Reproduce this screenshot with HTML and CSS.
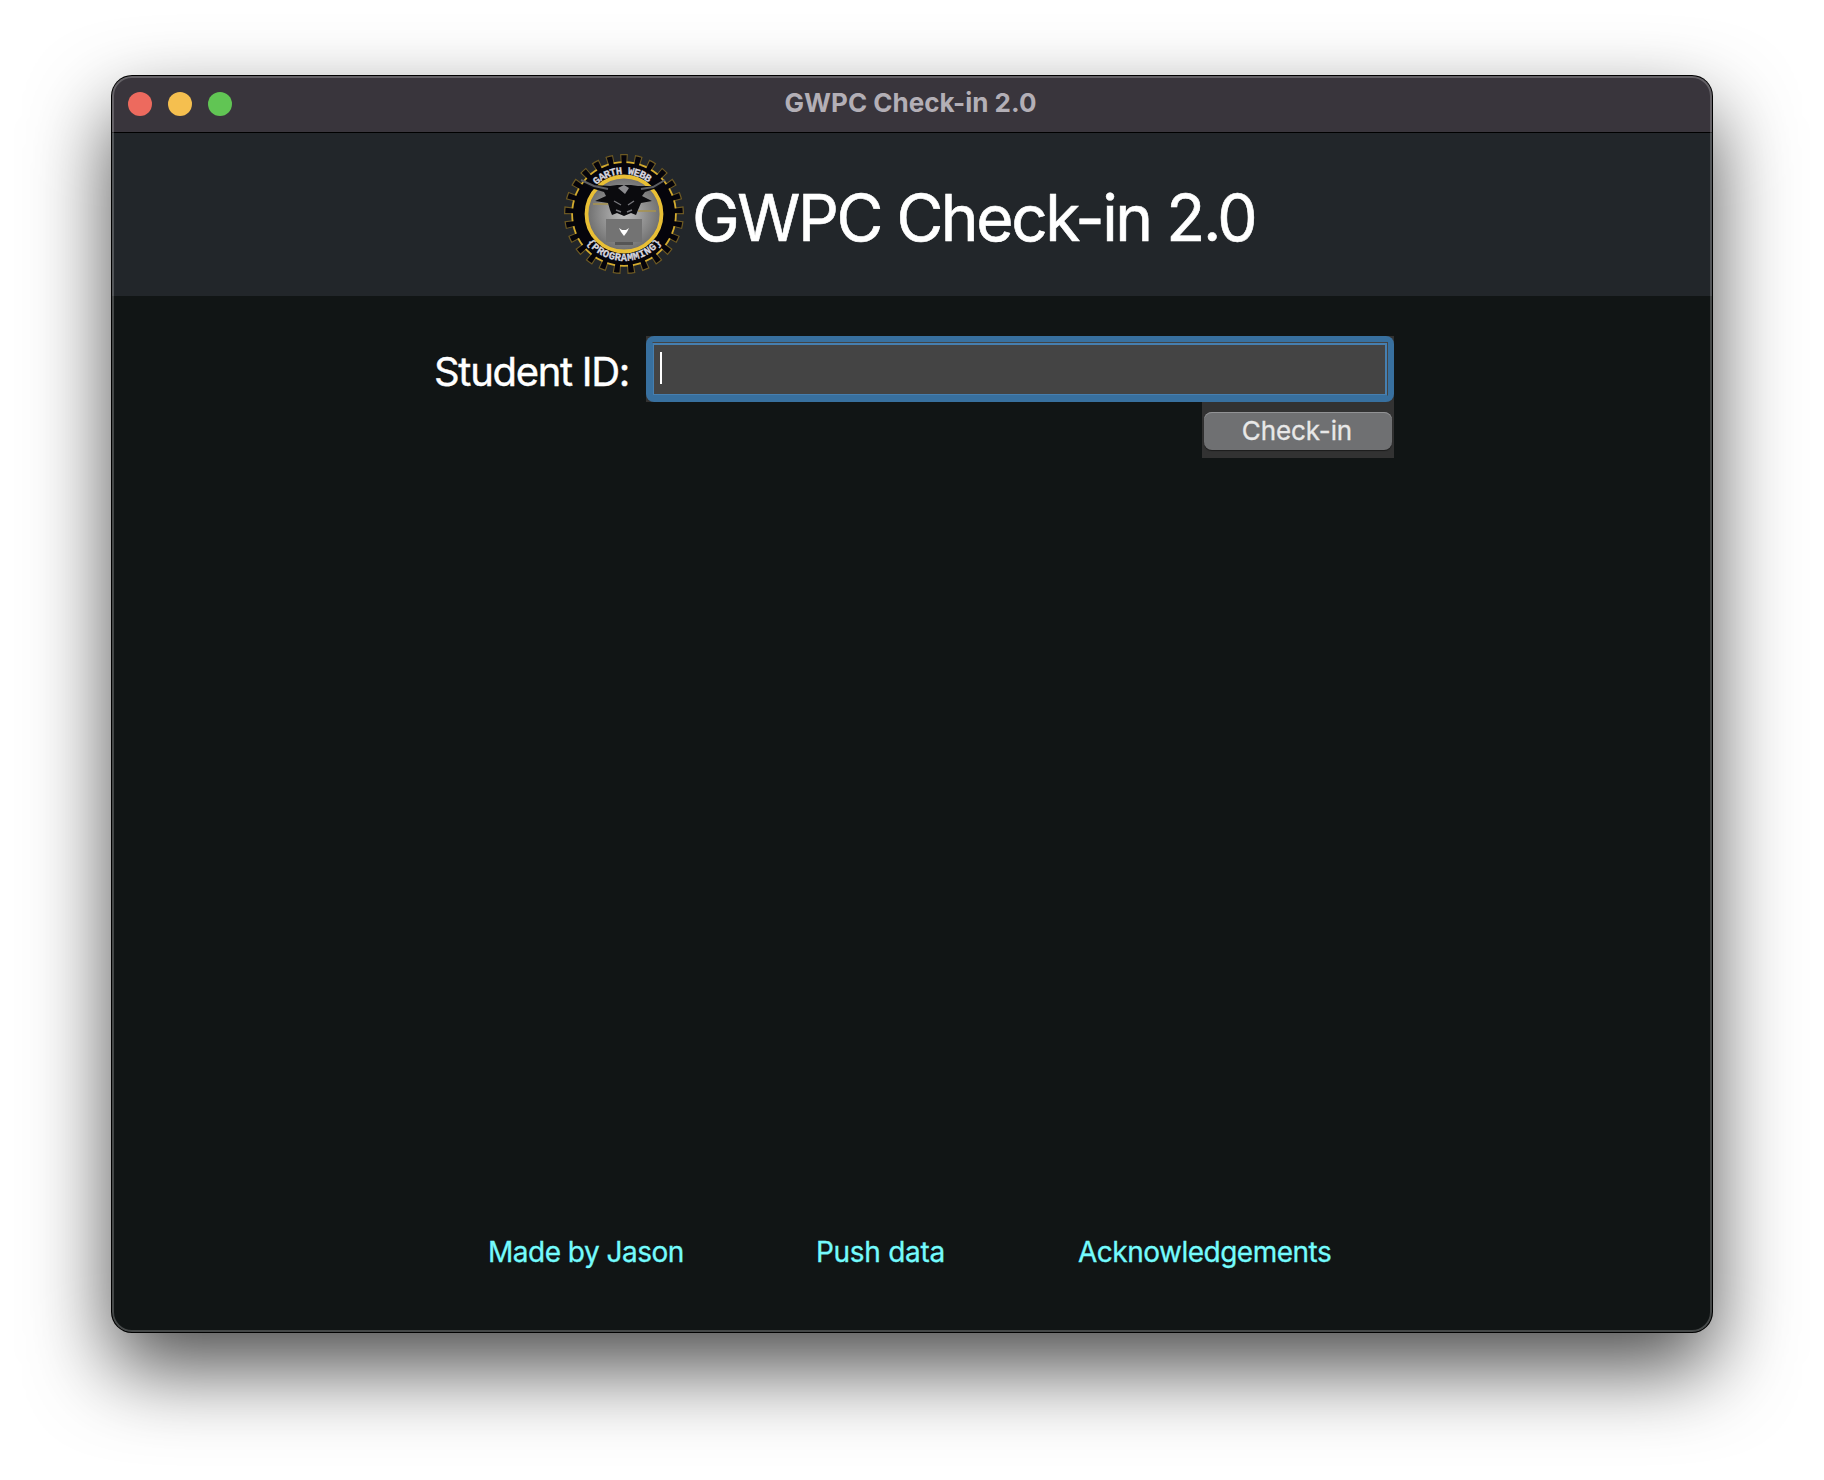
FILE: index.html
```html
<!DOCTYPE html>
<html lang="en">
<head>
<meta charset="utf-8">
<title>GWPC Check-in 2.0</title>
<link rel="stylesheet" href="styles.css">
</head>
<body>
<main class="window">
  <div class="titlebar">
    <div class="lights"><span class="light close"></span><span class="light minimize"></span><span class="light expand"></span></div>
    <div class="window-title">GWPC Check-in 2.0</div>
  </div>
  <header class="header">
    <svg class="logo" viewBox="-60 -60 120 120" aria-hidden="true">
      <defs>
        <path id="arc-top" d="M-40 0A40 40 0 0 1 40 0"/>
        <path id="arc-bottom" d="M-47 0A47 47 0 0 0 47 0"/>
        <radialGradient id="disc"><stop offset="0" stop-color="#c0c0c0"/><stop offset="1" stop-color="#6e6e6e"/></radialGradient>
      </defs>
      <circle class="teeth-edge" r="54" pathLength="100"/>
      <circle r="52.8" fill="#d4ab2e"/>
      <circle class="teeth" r="54" pathLength="100"/>
      <circle r="51" fill="#05040b"/>
      <circle r="37.5" fill="url(#disc)" stroke="#e9bf35" stroke-width="3.8"/>
      <path d="M-31-10h15M14-3h18" stroke="#a8924c" stroke-width="1.4"/>
      <path d="M-18 5h36v23h-36z" fill="#737373"/>
      <path d="M-9 28H9v3H-9z" fill="#555"/>
      <path d="M-43-34L-30-29L-14-28L-7-29L7-29L14-28L29-28L41-34L33-26L21-22L18-18L28-13L17-11L14-4L12 1L7-1L0 2L-7-1L-12 1L-14-4L-16-11L-29-13L-18-18L-20-22L-33-26Z" fill="#0b0b0e"/>
      <path d="M-43-34L-30-28L-16-25M41-34L29-27L17-25" fill="none" stroke="#5d5e63" stroke-width="2"/>
      <path d="M-6-26L0-29L5-26L1-20Z" fill="#8b8b8e"/>
      <path d="M-10-13L-3-9M10-13L4-9M-8-4L-3-2M8-4L3-2" stroke="#77777c" stroke-width="1.4"/>
      <path d="M-5 14L-2 16H2L5 14L3 18L0 22L-3 18Z" fill="#fff"/>
      <text class="logo-text"><textPath href="#arc-top" startOffset="48.5%" text-anchor="middle" textLength="57">GARTH WEBB</textPath></text>
      <text class="logo-text"><textPath href="#arc-bottom" startOffset="50%" text-anchor="middle" textLength="86">{PROGRAMMING}</textPath></text>
    </svg>
    <h1 class="heading">GWPC Check-in 2.0</h1>
  </header>
  <form class="form">
    <label class="label" for="student-id">Student ID:</label>
    <div class="controls">
      <div class="field-box"><div class="field" id="student-id"><div class="field-inner"><span class="caret"></span></div></div></div>
      <div class="button-box"><button class="button" type="button"><span>Check-in</span></button></div>
    </div>
  </form>
  <footer class="footer">
    <a class="link made">Made by Jason</a>
    <a class="link push">Push data</a>
    <a class="link ack">Acknowledgements</a>
  </footer>
</main>
</body>
</html>
```
FILE: styles.css
```css
* { box-sizing: border-box; }
body {
  margin: 0;
  height: 1480px;
  padding: 76px 112px 0;
  background: #fff;
  color: #fff;
  font-family: Inter, "Liberation Sans", sans-serif;
  overflow: hidden;
}
.window {
  position: relative;
  display: flex;
  flex-direction: column;
  width: 1600px;
  height: 1256px;
  border-radius: 20px;
  background: #111515;
  box-shadow: 0 0 0 1px #000, 0 36px 82px rgba(0,0,0,.7);
  overflow: clip;
}
/* light rim over the window's contents */
.window::after {
  content: "";
  position: absolute;
  inset: 0;
  border: 2px solid rgba(255,255,255,.22);
  border-radius: 20px;
}
.titlebar {
  display: grid;
  grid-template-columns: 1fr auto 1fr;
  align-items: center;
  height: 57px;
  background: #39353c;
  border-bottom: 1px solid #000;
}
.lights { display: flex; gap: 16px; padding-left: 16px; }
.light { width: 24px; height: 24px; border-radius: 50%; }
.close { background: #ed6a5e; }
.minimize { background: #f5bf4f; }
.expand { background: #61c554; }
.window-title {
  font-size: 26px;
  line-height: 32px;
  font-weight: 700;
  color: #b3afb6;
  padding: 0 3px 2px 0;
}
.header {
  display: flex;
  height: 163px;
  padding: 21px 0 0 452px;
  background: #22262a;
}
.logo { width: 120px; height: 120px; flex: none; }
.teeth, .teeth-edge { fill: none; }
.teeth-edge { stroke: #6d5923; stroke-width: 12px; stroke-dasharray: 2.1 1.9; stroke-dashoffset: 26.05; }
.teeth { stroke: #05040b; stroke-width: 9.5px; stroke-dasharray: 1.5 2.5; stroke-dashoffset: 25.75; }
.logo-text {
  font: 700 10.5px "Liberation Mono", monospace;
  fill: #d5d5df;
  stroke: #d5d5df;
  stroke-width: .3px;
}
.heading {
  margin: 24px 0 0 8px;
  font-size: 64px;
  line-height: 80px;
  font-weight: 400;
  white-space: nowrap;
  letter-spacing: -2.4px;
  -webkit-text-stroke: .6px #fff;
}
.form { display: flex; padding: 40px 0 0 322px; }
.label {
  width: 212px;
  padding-top: 12px;
  font-size: 40px;
  line-height: 48px;
  font-weight: 400;
  letter-spacing: -1.3px;
  -webkit-text-stroke: .4px #fff;
}
.controls { display: flex; flex-direction: column; align-items: flex-end; width: 748px; }
.field-box { width: 748px; background: #323232; }
.field {
  height: 66px;
  padding: 6px;
  background: #38709f;
  border-radius: 8px;
}
.field-inner {
  height: 54px;
  padding: 9px 0 0 7px;
  background: #444;
  border: 1px solid #444;
  border-left-color: #38709f;
  border-bottom-color: #38709f;
  box-shadow: inset 0 0 0 1px #467fb0, inset -2px 2px #467fb0;
}
.caret { display: block; width: 2px; height: 32px; background: #fff; }
.button-box { width: 192px; height: 56px; padding: 10px 2px 8px; background: #323232; }
.button {
  display: block;
  width: 188px;
  height: 38px;
  padding: 0 2px 0 0;
  border: 0;
  border-radius: 8px;
  background: #6f7072;
  box-shadow: inset 0 1px #929395, 0 1px 1px #1b1b1b;
  color: #e8e8e8;
  font: 400 26px/38px Inter, sans-serif;
  letter-spacing: -.1px;
  -webkit-text-stroke: .3px #e8e8e8;
}
.footer {
  display: flex;
  margin-top: auto;
  padding: 0 0 62px 376px;
  font-size: 28px;
  line-height: 36px;
  letter-spacing: -.5px;
  color: #74fbfd;
  -webkit-text-stroke: .3px #74fbfd;
}
.link { white-space: nowrap; }
.made { width: 328px; }
.push { width: 262px; letter-spacing: -.3px; }
```
